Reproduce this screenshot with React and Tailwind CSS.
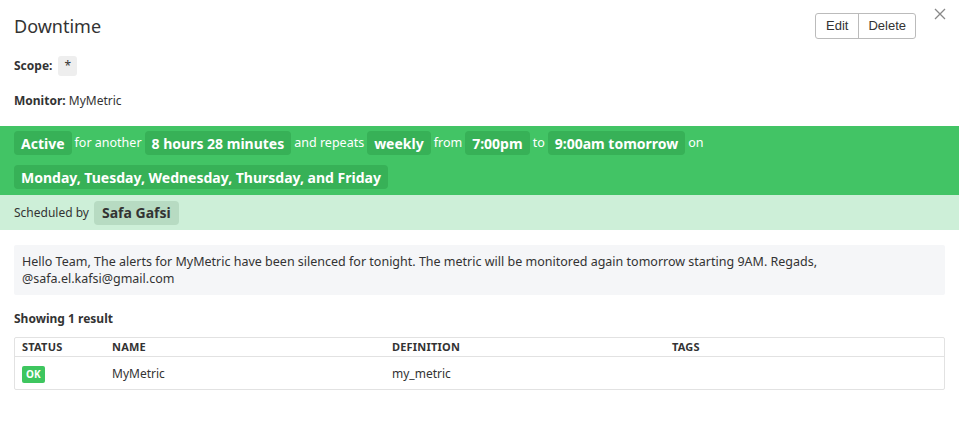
import React from 'react';

const font = { fontFamily: '"Noto Sans", "Open Sans", sans-serif' };

function Pill({ children }) {
  return (
    <span className="inline-flex h-[24px] items-center rounded-[4px] bg-[#37b157] px-[7px] text-[14px] font-bold text-white">
      {children}
    </span>
  );
}

function Word({ children }) {
  return <span className="mx-[3px] text-[12.5px] text-white">{children}</span>;
}

export default function App() {
  return (
    <div className="relative h-[435px] w-[959px] bg-white text-[#333]" style={font}>
      <div className="flex items-start justify-between px-[14px] pt-[13px]">
        <h1 className="pt-[1px] text-[18px] leading-[24px] text-[#333]">Downtime</h1>
        <div className="mr-[29px] flex h-[26px] rounded-[3px] border border-[#bbb] text-[13px] text-[#333]" style={{ fontFamily: '"Liberation Sans", Arial, sans-serif' }}>
          <button className="px-[10px]">Edit</button>
          <button className="border-l border-[#bbb] px-[9px]">Delete</button>
        </div>
      </div>
      <button className="absolute right-[12px] top-[7px] h-[14px] w-[14px] text-[#888]">
        <svg viewBox="0 0 14 14" className="h-[14px] w-[14px]" stroke="currentColor" strokeWidth="1.3">
          <path d="M2 2L12 12M12 2L2 12" />
        </svg>
      </button>

      <div className="mt-[17px] flex items-center px-[14px] text-[12px]">
        <span className="font-bold">Scope:</span>
        <span className="ml-[6px] inline-flex h-[20px] items-center rounded-[3px] bg-[#eee] px-[6px] text-[12px]">*</span>
      </div>
      <div className="mt-[16px] px-[14px] text-[12px]">
        <span className="font-bold">Monitor:</span> MyMetric
      </div>

      <div className="mt-[16px] bg-[#42c465] px-[14px] pb-[6px] pt-[5px]">
        <div className="flex items-center">
          <Pill>Active</Pill>
          <Word>for another</Word>
          <Pill>8 hours 28 minutes</Pill>
          <Word>and repeats</Word>
          <Pill>weekly</Pill>
          <Word>from</Word>
          <Pill>7:00pm</Pill>
          <Word>to</Word>
          <Pill>9:00am tomorrow</Pill>
          <Word>on</Word>
        </div>
        <div className="mt-[10px] flex">
          <Pill>Monday, Tuesday, Wednesday, Thursday, and Friday</Pill>
        </div>
      </div>
      <div className="flex h-[35px] items-center bg-[#cdefd8] px-[14px]">
        <span className="text-[12px] text-[#333]">Scheduled by</span>
        <span className="ml-[5px] inline-flex h-[24px] items-center rounded-[4px] bg-[#b7dbc2] px-[8px] text-[14px] font-bold text-[#333]">
          Safa Gafsi
        </span>
      </div>

      <div className="mx-[14px] mt-[15px] rounded-[2px] bg-[#f5f6f8] px-[8px] py-[8px] text-[12.5px] leading-[17px] text-[#333]">
        Hello Team, The alerts for MyMetric have been silenced for tonight. The metric will be monitored again tomorrow starting 9AM. Regads, @safa.el.kafsi@gmail.com
      </div>

      <div className="mt-[15px] px-[14px] text-[12px] font-bold">Showing 1 result</div>

      <div className="mx-[14px] mt-[9px] rounded-[2px] border border-[#e2e2e2] text-[11px]">
        <div className="grid h-[19px] grid-cols-[90px_280px_280px_1fr] items-center border-b border-[#e2e2e2] px-[7px] font-bold tracking-[0.2px]">
          <span>STATUS</span>
          <span>NAME</span>
          <span>DEFINITION</span>
          <span>TAGS</span>
        </div>
        <div className="grid h-[32px] grid-cols-[90px_280px_280px_1fr] items-center px-[7px] pt-[2px] text-[12px]">
          <span>
            <span className="inline-flex h-[17px] items-center rounded-[2px] bg-[#3ec65f] px-[4px] text-[10px] font-bold text-white">OK</span>
          </span>
          <span>MyMetric</span>
          <span>my_metric</span>
          <span></span>
        </div>
      </div>
    </div>
  );
}
